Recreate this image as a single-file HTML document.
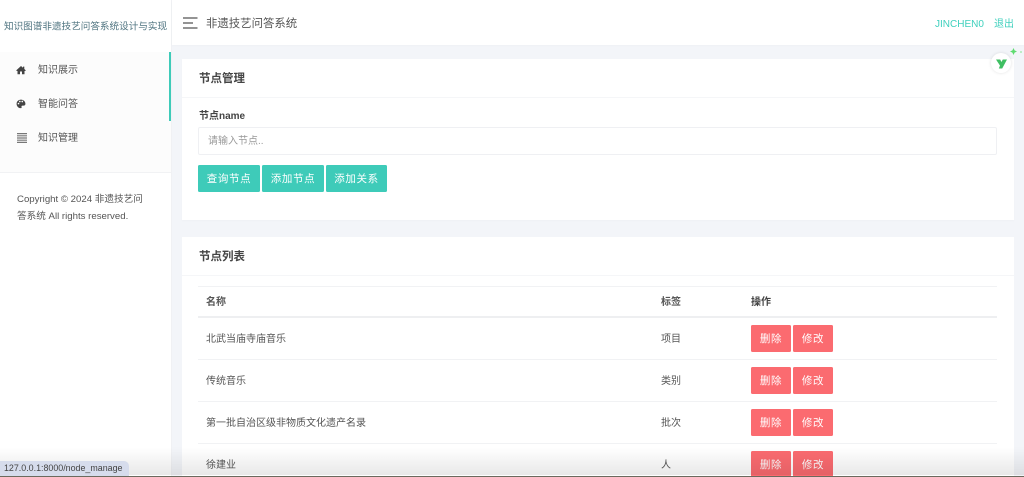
<!DOCTYPE html>
<html lang="zh">
<head>
<meta charset="utf-8">
<style>
html,body{margin:0;padding:0;}
body{width:1024px;height:477px;overflow:hidden;position:relative;background:#f3f5f9;font-family:"Liberation Sans","Noto Sans CJK SC",sans-serif;color:#555;}
#w{position:absolute;left:0;top:0;width:1024px;height:477px;overflow:hidden;filter:blur(.3px);}
.a{position:absolute;white-space:nowrap;}
.t{line-height:16px;}
.btn{position:absolute;height:27px;line-height:28px;text-align:center;color:#fff;font-size:10.5px;border-radius:1.5px;letter-spacing:.6px;}
.g{background:#3ecbb9;top:165px;}
.r{background:#fb6b70;width:40px;}
.line{position:absolute;background:#f1f2f4;height:1px;left:198px;width:799px;}
.cell{position:absolute;font-size:10px;line-height:16px;color:#555;white-space:nowrap;}
</style>
</head>
<body>
<div id="w">
<!-- sidebar -->
<div class="a" style="left:0;top:0;width:171px;height:477px;background:#fff;border-right:1px solid #f0f1f4;"></div>
<div class="a" style="left:0;top:52px;width:171px;height:121px;background:#fcfcfc;border-bottom:1px solid #f1f2f4;box-sizing:border-box;"></div>
<div class="a" style="left:169px;top:52px;width:2px;height:69px;background:#3ecbb9;"></div>
<div class="a t" style="left:4px;top:18px;font-size:9.6px;color:#4f7480;transform:translateY(1.5px);">知识图谱非遗技艺问答系统设计与实现</div>

<svg class="a" style="left:16px;top:65px" width="10" height="10" viewBox="0 0 10 10"><path d="M5 1 7 2.800V1.600H8.300V4L9.800 5.400 9.200 6H8.500V9.200H6V6.500H4V9.200H1.500V6H.8L.2 5.400Z" fill="#444"/></svg>
<div class="a t" style="left:38px;top:63px;font-size:10px;color:#555;">知识展示</div>

<svg class="a" style="left:16px;top:99px" width="10" height="10" viewBox="0 0 12 12"><path fill-rule="evenodd" d="M6 .8C2.900.8.700 3 .700 5.800S2.900 11 5.700 11C6.700 11 7 10.300 6.700 9.600 6.300 8.700 6.900 8 7.800 8H9.300C10.500 8 11.300 7.100 11.300 5.900 11.300 3 9 .8 6 .8ZM3 6.500A1 1 0 1 1 3 4.500 1 1 0 0 1 3 6.500ZM4.600 4A1 1 0 1 1 4.600 2 1 1 0 0 1 4.600 4ZM7.500 4A1 1 0 1 1 7.500 2 1 1 0 0 1 7.500 4Z" fill="#444"/></svg>
<div class="a t" style="left:38px;top:97px;font-size:10px;color:#555;">智能问答</div>

<svg class="a" style="left:16.500px;top:133px" width="10" height="10" viewBox="0 0 10 10"><path d="M0 .5H10M0 2.300H10M0 4.100H10M0 5.900H10M0 7.700H10M0 9.500H10" stroke="#777" stroke-width="1" fill="none"/></svg>
<div class="a t" style="left:38px;top:131px;font-size:10px;color:#555;">知识管理</div>

<div class="a" style="left:17px;top:191px;width:140px;font-size:9.650px;line-height:17px;color:#555;white-space:normal;">Copyright © 2024 非遗技艺问<br>答系统 All rights reserved.</div>

<!-- header -->
<div class="a" style="left:172px;top:0;width:852px;height:45px;background:#fff;box-shadow:0 1px 2px rgba(0,0,0,.02);"></div>
<svg class="a" style="left:183px;top:17px" width="15" height="12" viewBox="0 0 15 12"><path d="M0 1H14.500M0 6H10M0 11H14.500" stroke="#555" stroke-width="1.300" fill="none"/></svg>
<div class="a t" style="left:206px;top:16px;font-size:11.400px;color:#555;">非遗技艺问答系统</div>
<div class="a t" style="left:935px;top:17px;font-size:10px;color:#3fd0bd;">JINCHEN0</div>
<div class="a t" style="left:994px;top:17px;font-size:10px;color:#3fd0bd;">退出</div>

<!-- card 1 -->
<div class="a" style="left:182px;top:59px;width:832px;height:161px;background:#fff;box-shadow:0 1px 2px rgba(0,0,0,.02);"></div>
<div class="a" style="left:182px;top:97px;width:832px;height:1px;background:#f5f6f8;"></div>
<div class="a t" style="left:199px;top:71px;font-size:11.500px;font-weight:bold;color:#444;">节点管理</div>
<div class="a t" style="left:199px;top:109px;font-size:10px;font-weight:bold;color:#444;">节点name</div>
<div class="a" style="left:198px;top:127px;width:799px;height:28px;background:#fff;border:1px solid #eff0f3;border-radius:2px;box-sizing:border-box;"></div>
<div class="a t" style="left:208px;top:134px;font-size:10px;color:#999;">请输入节点..</div>
<div class="btn g" style="left:198px;width:62px;">查询节点</div>
<div class="btn g" style="left:262px;width:62px;">添加节点</div>
<div class="btn g" style="left:326px;width:61px;">添加关系</div>

<!-- card 2 -->
<div class="a" style="left:182px;top:237px;width:832px;height:240px;background:#fff;"></div>
<div class="a" style="left:182px;top:275px;width:832px;height:1px;background:#f5f6f8;"></div>
<div class="a t" style="left:199px;top:249px;font-size:11.500px;font-weight:bold;color:#444;">节点列表</div>
<div class="line" style="top:286px;"></div>
<div class="line" style="top:316px;height:2px;background:#eeeff1;"></div>
<div class="line" style="top:359px;"></div>
<div class="line" style="top:401px;"></div>
<div class="line" style="top:443px;"></div>

<div class="cell" style="left:206px;top:295px;font-weight:bold;color:#555;">名称</div>
<div class="cell" style="left:661px;top:295px;font-weight:bold;color:#555;">标签</div>
<div class="cell" style="left:751px;top:295px;font-weight:bold;color:#444;">操作</div>

<div class="cell" style="left:206px;top:332px;">北武当庙寺庙音乐</div>
<div class="cell" style="left:661px;top:332px;">项目</div>
<div class="btn r" style="left:751px;top:325px;">删除</div>
<div class="btn r" style="left:793px;top:325px;">修改</div>

<div class="cell" style="left:206px;top:374px;">传统音乐</div>
<div class="cell" style="left:661px;top:374px;">类别</div>
<div class="btn r" style="left:751px;top:367px;">删除</div>
<div class="btn r" style="left:793px;top:367px;">修改</div>

<div class="cell" style="left:206px;top:416px;">第一批自治区级非物质文化遗产名录</div>
<div class="cell" style="left:661px;top:416px;">批次</div>
<div class="btn r" style="left:751px;top:409px;">删除</div>
<div class="btn r" style="left:793px;top:409px;">修改</div>

<div class="cell" style="left:206px;top:458px;">徐建业</div>
<div class="cell" style="left:661px;top:458px;">人</div>
<div class="btn r" style="left:751px;top:451px;">删除</div>
<div class="btn r" style="left:793px;top:451px;">修改</div>

<!-- floating badge -->
<div class="a" style="left:991px;top:53px;width:20px;height:20px;border-radius:50%;background:#fff;box-shadow:0 0 3px rgba(0,0,0,.12);"></div>
<svg class="a" style="left:996px;top:59px" width="11" height="10" viewBox="0 0 11 10"><path d="M0 .5H4.200L5.400 3 6.800 .5H11L6.200 9.500H2.800L4 6.600Z" fill="#3fbf62"/></svg>
<svg class="a" style="left:1010px;top:48px" width="7" height="7" viewBox="0 0 7 7"><path d="M3.500 0 4.600 2.400 7 3.500 4.600 4.600 3.500 7 2.400 4.600 0 3.500 2.400 2.400Z" fill="#5fdc70"/></svg>
<div class="a" style="left:1020px;top:51px;width:2px;height:2px;background:#bdeec4;"></div>

<!-- bottom fade -->
<div class="a" style="left:0;top:447px;width:1024px;height:28px;background:linear-gradient(to bottom,rgba(0,0,0,0),rgba(0,0,0,.09));"></div>
<div class="a" style="left:0;top:475.500px;width:1024px;height:2px;background:#6b6a5e;"></div>

<!-- status bubble -->
<div class="a" style="left:0;top:461px;width:129px;height:15px;background:#d6dcec;border-radius:0 5px 0 0;font-size:8.900px;line-height:15px;color:#444;padding-left:4px;box-sizing:border-box;">127.0.0.1:8000/node_manage</div>
</div>
</body>
</html>
